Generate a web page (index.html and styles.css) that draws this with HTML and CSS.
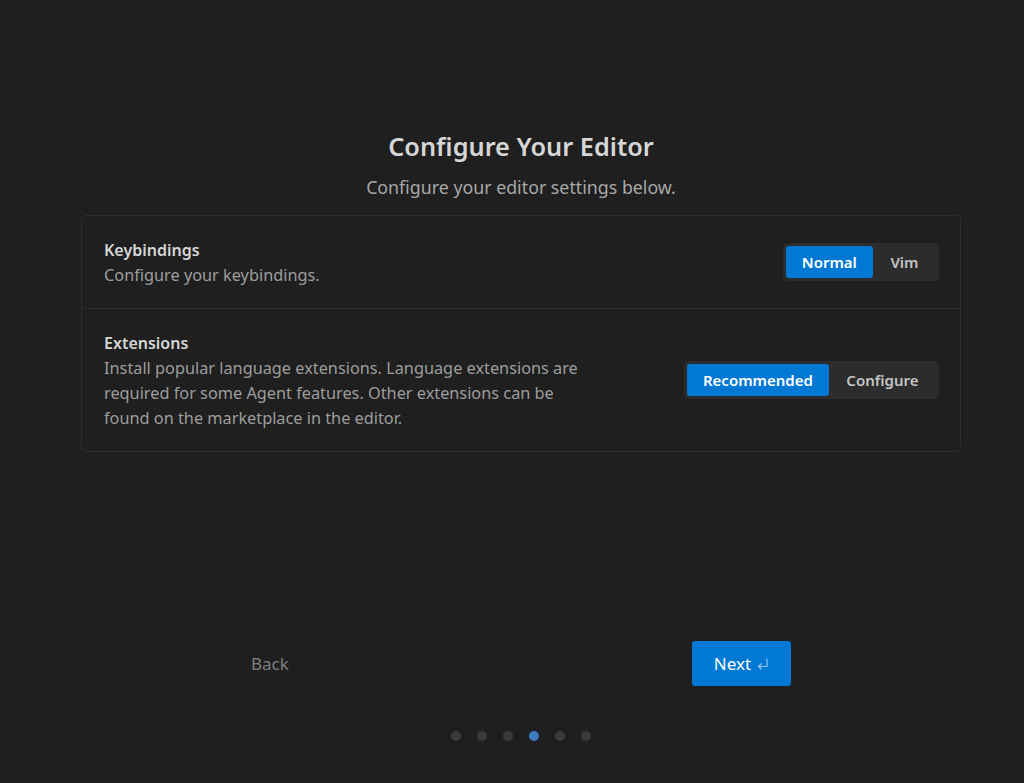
FILE: index.html
```html
<!DOCTYPE html>
<html lang="en">
<head>
<meta charset="utf-8">
<title>Configure Your Editor</title>
<link rel="stylesheet" href="styles.css">
</head>
<body>
<div class="page">
  <header class="head">
    <h1 class="title">Configure Your Editor</h1>
    <p class="subtitle">Configure your editor settings below.</p>
  </header>
  <section class="card">
    <div class="row">
      <div class="info">
        <div class="label">Keybindings</div>
        <div class="desc">Configure your keybindings.</div>
      </div>
      <div class="seg">
        <button class="seg-btn active">Normal</button>
        <button class="seg-btn">Vim</button>
      </div>
    </div>
    <div class="row">
      <div class="info">
        <div class="label">Extensions</div>
        <div class="desc">Install popular language extensions. Language extensions are required for some Agent features. Other extensions can be found on the marketplace in the editor.</div>
      </div>
      <div class="seg">
        <button class="seg-btn active">Recommended</button>
        <button class="seg-btn">Configure</button>
      </div>
    </div>
  </section>
  <footer class="footer">
    <button class="back">Back</button>
    <button class="next">Next <svg class="enter" width="13" height="14" viewBox="0 0 13 14"><path d="M11 1.5V9.5H2.5M5.5 6.5L2.5 9.5L5.5 12.5" fill="none" stroke="currentColor" stroke-width="1.1"/></svg></button>
  </footer>
  <nav class="dots">
    <span class="dot"></span>
    <span class="dot"></span>
    <span class="dot"></span>
    <span class="dot on"></span>
    <span class="dot"></span>
    <span class="dot"></span>
  </nav>
</div>
</body>
</html>
```

FILE: styles.css
```css
* { box-sizing: border-box; }
html, body {
  margin: 0;
  height: 100%;
  background: #1f1f1f;
}
body {
  font-family: "Noto Sans", "Open Sans", sans-serif;
  color: #cccccc;
}
.page {
  height: 783px;
  display: flex;
  flex-direction: column;
  align-items: center;
  padding: 130px 0 42px 18px;
}
.head { text-align: center; }
.title {
  margin: 0;
  font-size: 25.3px;
  line-height: 32px;
  font-weight: 600;
  color: #d6d6d6;
}
.subtitle {
  margin: 13px 0 0;
  font-size: 17.8px;
  line-height: 24px;
  color: #a8a8a8;
}
.card {
  width: 880px;
  margin-top: 16px;
  border: 1px solid #2e2e2e;
  border-radius: 5px;
}
.row {
  display: flex;
  align-items: center;
  justify-content: space-between;
  padding: 22px 21px 20px 22px;
}
.row + .row { border-top: 1px solid #2e2e2e; }
.info { max-width: 490px; }
.label {
  font-size: 16px;
  line-height: 25px;
  font-weight: 600;
  color: #d6d6d6;
}
.desc {
  font-size: 16.3px;
  line-height: 25px;
  color: #9d9d9d;
}
.seg {
  display: flex;
  padding: 3px;
  margin-top: -2px;
  background: #2c2c2c;
  border-radius: 5px;
}
.seg-btn {
  font: inherit;
  font-size: 15px;
  font-weight: 600;
  height: 32px;
  padding: 0 17.5px;
  border: 0;
  border-radius: 3px;
  background: transparent;
  color: #c4c4c4;
}
.seg-btn.active {
  padding: 0 16px;
  background: #0078d4;
  color: #ffffff;
}
.footer {
  margin-top: auto;
  width: 540px;
  display: flex;
  align-items: center;
  justify-content: space-between;
}
.back {
  font: inherit;
  font-size: 17px;
  background: none;
  border: 0;
  padding: 0;
  color: #7f7f7f;
}
.next {
  font: inherit;
  font-size: 17px;
  color: #ffffff;
  background: #0078d4;
  border: 0;
  border-radius: 3px;
  width: 99px;
  height: 45px;
  display: flex;
  align-items: center;
  justify-content: center;
  gap: 5px;
}
.enter { color: rgba(255,255,255,0.6); }
.dots {
  margin-top: 45px;
  display: flex;
  gap: 16px;
}
.dot {
  width: 10px;
  height: 10px;
  border-radius: 50%;
  background: #3a3a3a;
}
.dot.on { background: #3b7dbf; }
```
